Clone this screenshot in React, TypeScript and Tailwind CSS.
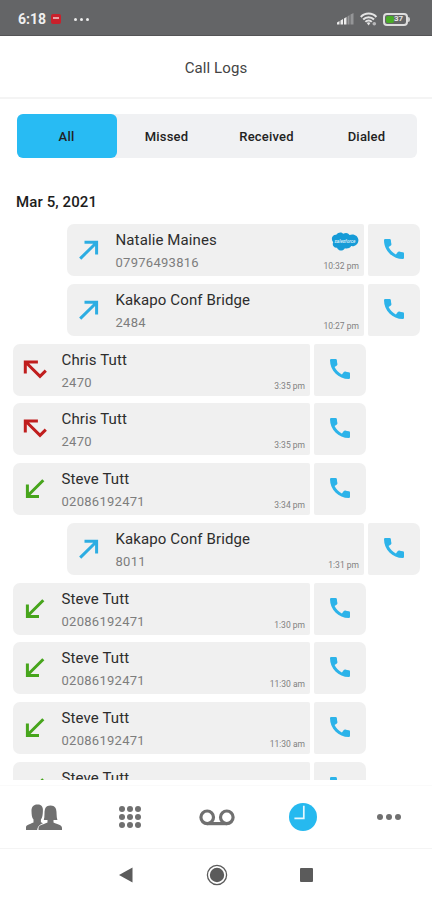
type Direction = 'dialed' | 'missed' | 'received';

interface CallItem {
  name: string;
  number?: string;
  time?: string;
  direction: Direction;
  salesforce?: boolean;
}

const tabs = ['All', 'Missed', 'Received', 'Dialed'];

const calls: CallItem[] = [
  { name: 'Natalie Maines', number: '07976493816', time: '10:32 pm', direction: 'dialed', salesforce: true },
  { name: 'Kakapo Conf Bridge', number: '2484', time: '10:27 pm', direction: 'dialed' },
  { name: 'Chris Tutt', number: '2470', time: '3:35 pm', direction: 'missed' },
  { name: 'Chris Tutt', number: '2470', time: '3:35 pm', direction: 'missed' },
  { name: 'Steve Tutt', number: '02086192471', time: '3:34 pm', direction: 'received' },
  { name: 'Kakapo Conf Bridge', number: '8011', time: '1:31 pm', direction: 'dialed' },
  { name: 'Steve Tutt', number: '02086192471', time: '1:30 pm', direction: 'received' },
  { name: 'Steve Tutt', number: '02086192471', time: '11:30 am', direction: 'received' },
  { name: 'Steve Tutt', number: '02086192471', time: '11:30 am', direction: 'received' },
  { name: 'Steve Tutt', direction: 'received' },
];

function StatusBar() {
  return (
    <div className="flex h-9 shrink-0 items-center border-b border-[#545456] bg-[#646567] pl-[18px] pr-[22px] pt-[3px] text-white">
      <span className="w-[29px] text-[14px] font-bold leading-none text-[#f0f0f0]">6:18</span>
      <span className="ml-[4px] flex h-[10px] w-[10px] justify-center rounded-[2px] bg-[#c9202b] pt-[3px]">
        <span className="h-[2px] w-[6px] bg-[#e9a0a3]" />
      </span>
      <span className="ml-[13px] flex gap-[3px]">
        <i className="h-[3px] w-[3px] rounded-full bg-[#ededed]" />
        <i className="h-[3px] w-[3px] rounded-full bg-[#ededed]" />
        <i className="h-[3px] w-[3px] rounded-full bg-[#ededed]" />
      </span>
      <svg className="ml-auto" width="17" height="12" viewBox="0 0 17 12">
        <path d="M0 11.5V9.5L2.5 8V11.5ZM3.5 11.5V7.5L6 6V11.5ZM7 11.5V5.5L9.5 4V11.5Z" fill="#ececec" />
        <path d="M10.5 11.5V3.5L12.5 2V11.5ZM13.5 11.5V1.5L16.5 0V11.5Z" fill="#949597" />
      </svg>
      <svg className="ml-[6px]" width="18" height="15" viewBox="0 0 18 15">
        <g fill="none" stroke="#e4e4e4" strokeWidth="2">
          <path d="M.8 5C5 .4 12.2.4 16.4 5" />
          <path d="M3.2 7.5C6 4.5 11.2 4.5 14 7.5" />
          <path d="M5.4 9.9C7.2 8 10 8 11.8 9.9" />
        </g>
        <path d="M6.8 11.1Q8.6 9.5 10.4 11.1L8.6 13.5Z" fill="#e4e4e4" />
        <circle cx="14.3" cy="11.8" r="1.8" fill="#b8b8ba" />
      </svg>
      <div className="ml-[5px] flex items-center">
        <div className="flex h-[13px] w-[25px] items-center rounded-[4px] border-2 border-[#dedede] p-px">
          <span className="h-full w-[8px] shrink-0 rounded-[2px] bg-[#49ac27]" />
          <span className="text-[8px] font-bold leading-none text-[#e6e6e6]">37</span>
        </div>
        <span className="h-[5px] w-[2px] rounded-r bg-[#d0d0d0]" />
      </div>
    </div>
  );
}

function DirectionIcon({ direction }: { direction: Direction }) {
  if (direction === 'missed') {
    return (
      <svg width="24" height="20" viewBox="0 0 24 20" fill="none" stroke="#c01e1e" strokeWidth="3">
        <path d="M2.3 13.4V2.1H14.9M3 2.5L17 16.4L22.8 10.6" />
      </svg>
    );
  }
  const dialed = direction === 'dialed';
  return (
    <svg
      width="20"
      height="20"
      viewBox="0 0 20 20"
      fill="none"
      stroke={dialed ? '#2dade2' : '#47a51c'}
      strokeWidth="3"
    >
      {dialed ? <path d="M5.5 2.3H17.6V14.4M17.1 3L1.2 18.6" /> : <path d="M18.3 1.3L2.7 16.8M2.4 5.5V17.6H14" />}
    </svg>
  );
}

function PhoneIcon() {
  return (
    <svg width="20" height="20" viewBox="0 0 20 20" fill="#2cb3e9">
      <path d="M1.1 0H5.6Q6.8 0 6.9 1.2Q7 3.3 7.4 4.9Q7.6 5.8 6.9 6.5L4.6 8.1C6.1 11.3 8.7 13.9 11.9 15.4L13.8 13.1Q14.4 12.5 15.2 12.6Q17 13.1 18.8 13.2Q20 13.3 20 14.4V18.8Q20 20 18.8 20C8.5 20 0 11.5 0 1.2Q0 0 1.1 0Z" />
    </svg>
  );
}

function SalesforceLogo() {
  return (
    <svg width="28" height="19" viewBox="0 0 28 19">
      <path
        d="M2.2 10.2C-.6 7 1.2 2.6 5.2 2.8C7.5-.2 10.5-.2 12.2 1.8C14.6.3 17.2.7 18.5 3C22.7 1.2 27.5 4 27.4 8.2C27.3 12.2 23.8 14.8 20.2 14.1C18.6 16.6 15.8 17 13.9 16.3C12 19.6 7.4 19.3 6 15.8C2.7 16.2.8 13 2.2 10.2Z"
        fill="#169bd7"
      />
      <text
        x="14"
        y="11"
        fill="#e4f5fd"
        fontFamily="Roboto, sans-serif"
        fontSize="4.6"
        fontStyle="italic"
        fontWeight="500"
        textAnchor="middle"
      >
        salesforce
      </text>
    </svg>
  );
}

function CallRow({ item }: { item: CallItem }) {
  const dialed = item.direction === 'dialed';
  return (
    <div className={`flex h-[52px] shrink-0 gap-[4px] ${dialed ? 'ml-[67px]' : 'ml-[13px]'}`}>
      <div className="flex w-[296.5px] rounded-l-[7px] rounded-r-[2px] bg-[#f0f0f0]">
        <div className="flex w-[44px] shrink-0 items-center justify-center">
          <DirectionIcon direction={item.direction} />
        </div>
        <div className="ml-[4.5px] flex-1 pt-[6px]">
          <p className="text-[15px] leading-[20px] tracking-[0.12px] text-[#2d2d2d]">{item.name}</p>
          {item.number && (
            <p className="mt-[4px] text-[13px] leading-[18px] tracking-[0.28px] text-[#7d7d7d]">{item.number}</p>
          )}
        </div>
        <div className="flex flex-col items-end justify-between pb-[5px] pr-[4.5px] pt-[8px]">
          {item.salesforce ? <SalesforceLogo /> : <span />}
          {item.time && <span className="text-[8.5px] leading-[10px] text-[#808080]">{item.time}</span>}
        </div>
      </div>
      <div className="flex w-[52.5px] items-center justify-center rounded-l-[2px] rounded-r-[7px] bg-[#f0f0f0] pb-[2px]">
        <PhoneIcon />
      </div>
    </div>
  );
}

function BottomNav() {
  return (
    <nav className="flex h-[63px] shrink-0 items-center border-b border-[#f4f4f4] bg-white text-[#707070]">
      <div className="flex w-[87px] justify-center">
        <svg width="36" height="27" viewBox="0 0 36 27" fill="currentColor">
          <path d="M0 26V23.5C0 20.8 3.5 20.3 7.5 18.5V15.5C5.8 14 5.6 10.5 5.5 7C5.4 2.8 7.7.6 11.2.6C15.4.3 17.2 3 16.9 7C16.8 10.7 16.4 14 14.9 15.5V18.3L17 19.2C13.8 20.6 11.7 22 11.2 26Z" />
          <path d="M12.5 26V24C12.8 20.8 16.4 20.7 21.5 18.4V16H17.8C19 12.5 18 8.3 19 5C20.1.5 28.6.3 30 5C31 8.4 30.2 12.6 31.4 16H27.5V18.4C31.6 20.6 35.8 20.2 36 24V26Z" />
        </svg>
      </div>
      <div className="flex w-[86px] justify-center">
        <div className="grid grid-cols-3 gap-[2.4px]">
          {Array.from({ length: 9 }, (_, i) => (
            <span key={i} className="h-[6px] w-[6px] rounded-full bg-current" />
          ))}
        </div>
      </div>
      <div className="flex w-[87px] justify-center">
        <svg width="36" height="17" viewBox="0 0 36 17" fill="none" stroke="currentColor" strokeWidth="3.2">
          <circle cx="8.2" cy="8.3" r="6.3" />
          <circle cx="27.8" cy="8.3" r="6.3" />
          <path d="M8.2 14.6H27.8" />
        </svg>
      </div>
      <div className="flex w-[86px] justify-center">
        <svg width="28" height="28" viewBox="0 0 28 28">
          <circle cx="14" cy="14" r="14" fill="#26b9ef" />
          <path d="M14.8 2.8V15.3H5.4" fill="none" stroke="#e6f7fd" strokeWidth="1.7" />
        </svg>
      </div>
      <div className="flex w-[86px] justify-center gap-[3px]">
        <span className="h-[6px] w-[6px] rounded-full bg-current" />
        <span className="h-[6px] w-[6px] rounded-full bg-current" />
        <span className="h-[6px] w-[6px] rounded-full bg-current" />
      </div>
    </nav>
  );
}

function SystemNav() {
  return (
    <div className="flex h-[51px] shrink-0 items-center pl-[119px] text-[#5b5b5b]">
      <svg width="14" height="16" viewBox="0 0 14 16" fill="currentColor">
        <path d="M0 8L13.5.5V15.5Z" />
      </svg>
      <svg className="ml-[73px]" width="22" height="22" viewBox="0 0 22 22">
        <circle cx="11" cy="11" r="9.6" fill="none" stroke="currentColor" strokeWidth="1.3" />
        <circle cx="11" cy="11" r="7.2" fill="currentColor" />
      </svg>
      <span className="ml-[72px] h-[14px] w-[13px] rounded-[1px] bg-current" />
    </div>
  );
}

function App() {
  return (
    <div className="flex h-[900px] w-[432px] flex-col overflow-hidden bg-white font-[Roboto,sans-serif]">
      <StatusBar />
      <header className="flex h-[63px] shrink-0 items-center justify-center border-b-2 border-[#f4f4f4]">
        <h1 className="pt-[3px] text-[15px] tracking-[0.1px] text-[#444]">Call Logs</h1>
      </header>
      <div className="ml-[16.5px] mr-[15.5px] mt-[15px] flex h-[44px] shrink-0 rounded-[6px] bg-[#f0f1f3]">
        {tabs.map((tab, index) => (
          <button
            key={tab}
            className={`flex-1 rounded-[6px] pt-px text-[13px] font-medium tracking-[0.2px] text-[#222] ${
              index === 0 ? 'bg-[#28bbf3]' : ''
            }`}
          >
            {tab}
          </button>
        ))}
      </div>
      <h2 className="ml-4 mt-[34px] h-[32px] shrink-0 text-[15px] font-medium leading-[20px] tracking-[0.1px] text-[#1c1c1c]">
        Mar 5, 2021
      </h2>
      <main className="flex h-[556px] shrink-0 flex-col gap-[7.75px] overflow-hidden">
        {calls.map((item, index) => (
          <CallRow key={index} item={item} />
        ))}
      </main>
      <div className="h-[6px] shrink-0 border-b border-[#fafafa]" />
      <BottomNav />
      <SystemNav />
    </div>
  );
}
export default App;
